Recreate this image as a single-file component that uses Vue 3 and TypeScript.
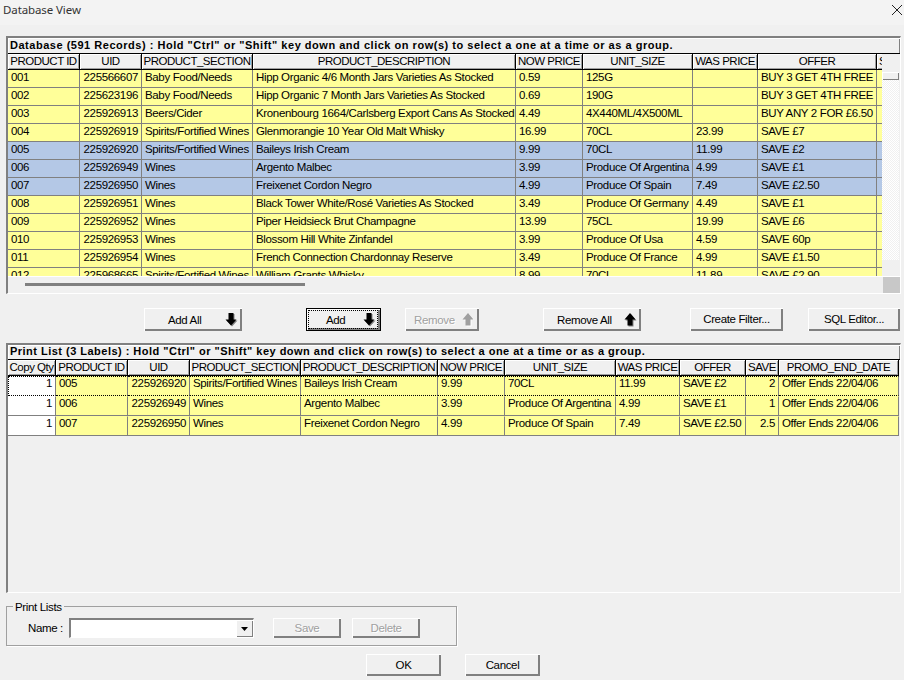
<script setup lang="ts">
interface Column {
  label: string;
  width: number;
  right?: boolean;
}

const dbColumns: Column[] = [
  { label: 'PRODUCT ID', width: 72 },
  { label: 'UID', width: 62, right: true },
  { label: 'PRODUCT_SECTION', width: 111 },
  { label: 'PRODUCT_DESCRIPTION', width: 263 },
  { label: 'NOW PRICE', width: 67 },
  { label: 'UNIT_SIZE', width: 110 },
  { label: 'WAS PRICE', width: 65 },
  { label: 'OFFER', width: 119 },
  { label: 'SAVE', width: 33 }
];

const dbRows: string[][] = [
  ['001', '225566607', 'Baby Food/Needs', 'Hipp Organic 4/6 Month Jars Varieties As Stocked', '0.59', '125G', '', 'BUY 3 GET 4TH FREE', ''],
  ['002', '225623196', 'Baby Food/Needs', 'Hipp Organic 7 Month Jars Varieties As Stocked', '0.69', '190G', '', 'BUY 3 GET 4TH FREE', ''],
  ['003', '225926913', 'Beers/Cider', 'Kronenbourg 1664/Carlsberg Export Cans As Stocked', '4.49', '4X440ML/4X500ML', '', 'BUY ANY 2 FOR £6.50', ''],
  ['004', '225926919', 'Spirits/Fortified Wines', 'Glenmorangie 10 Year Old Malt Whisky', '16.99', '70CL', '23.99', 'SAVE £7', ''],
  ['005', '225926920', 'Spirits/Fortified Wines', 'Baileys Irish Cream', '9.99', '70CL', '11.99', 'SAVE £2', ''],
  ['006', '225926949', 'Wines', 'Argento Malbec', '3.99', 'Produce Of Argentina', '4.99', 'SAVE £1', ''],
  ['007', '225926950', 'Wines', 'Freixenet Cordon Negro', '4.99', 'Produce Of Spain', '7.49', 'SAVE £2.50', ''],
  ['008', '225926951', 'Wines', 'Black Tower White/Rosé Varieties As Stocked', '3.49', 'Produce Of Germany', '4.49', 'SAVE £1', ''],
  ['009', '225926952', 'Wines', 'Piper Heidsieck Brut Champagne', '13.99', '75CL', '19.99', 'SAVE £6', ''],
  ['010', '225926953', 'Wines', 'Blossom Hill White Zinfandel', '3.99', 'Produce Of Usa', '4.59', 'SAVE 60p', ''],
  ['011', '225926954', 'Wines', 'French Connection Chardonnay Reserve', '3.49', 'Produce Of France', '4.99', 'SAVE £1.50', ''],
  ['012', '225968665', 'Spirits/Fortified Wines', 'William Grants Whisky', '8.99', '70CL', '11.89', 'SAVE £2.90', '']
];

const selectedIds = ['005', '006', '007'];

const printColumns: Column[] = [
  { label: 'Copy Qty', width: 48, right: true },
  { label: 'PRODUCT ID', width: 72 },
  { label: 'UID', width: 62, right: true },
  { label: 'PRODUCT_SECTION', width: 111 },
  { label: 'PRODUCT_DESCRIPTION', width: 137 },
  { label: 'NOW PRICE', width: 67 },
  { label: 'UNIT_SIZE', width: 111 },
  { label: 'WAS PRICE', width: 64 },
  { label: 'OFFER', width: 66 },
  { label: 'SAVE', width: 33, right: true },
  { label: 'PROMO_END_DATE', width: 120 }
];

const printRows: string[][] = [
  ['1', '005', '225926920', 'Spirits/Fortified Wines', 'Baileys Irish Cream', '9.99', '70CL', '11.99', 'SAVE £2', '2', 'Offer Ends 22/04/06'],
  ['1', '006', '225926949', 'Wines', 'Argento Malbec', '3.99', 'Produce Of Argentina', '4.99', 'SAVE £1', '1', 'Offer Ends 22/04/06'],
  ['1', '007', '225926950', 'Wines', 'Freixenet Cordon Negro', '4.99', 'Produce Of Spain', '7.49', 'SAVE £2.50', '2.5', 'Offer Ends 22/04/06']
];

const tableWidth = (cols: Column[]) => cols.reduce((sum, c) => sum + c.width, 0);
</script>

<template>
  <div class="dialog">
    <div class="titlebar">
      <span class="title">Database View</span>
      <svg class="close" width="12" height="12" viewBox="0 0 12 12">
        <path d="M1 1L11 11M11 1L1 11" stroke="#222" stroke-width="1" fill="none" />
      </svg>
    </div>

    <section class="panel db-panel">
      <div class="caption">Database (591 Records) : Hold "Ctrl" or "Shift" key down and click on row(s) to select a one at a time or as a group.</div>
      <div class="db-body">
        <div class="viewport">
          <table :style="{ width: tableWidth(dbColumns) + 'px' }">
            <colgroup>
              <col v-for="c in dbColumns" :key="c.label" :style="{ width: c.width + 'px' }" />
            </colgroup>
            <thead>
              <tr>
                <th v-for="c in dbColumns" :key="c.label">{{ c.label }}</th>
              </tr>
            </thead>
            <tbody>
              <tr v-for="row in dbRows" :key="row[0]" class="db-row" :class="{ selected: selectedIds.includes(row[0]) }">
                <td v-for="(cell, i) in row" :key="i" :class="{ right: dbColumns[i].right }">{{ cell }}</td>
              </tr>
            </tbody>
          </table>
        </div>
        <div class="vscroll">
          <div class="vtrack">
            <div class="vthumb"></div>
          </div>
        </div>
      </div>
      <div class="hscroll">
        <div class="htrack"><div class="hthumb"></div></div>
        <div class="corner"></div>
      </div>
    </section>

    <div class="actions">
      <button class="btn add-all">
        <span>Add All</span>
        <svg class="arrow" width="13" height="14" viewBox="0 0 13 14">
          <path d="M4.500 1h5v6.500h3L7 13.500 1.500 7.500h3z" fill="#808080" />
          <path d="M3.500 0h5v6.500h3L6 12.500 .5 6.500h3z" fill="#000" />
        </svg>
      </button>
      <button class="btn add focused">
        <span class="focus-ring">
          <span>Add</span>
          <svg class="arrow" width="13" height="14" viewBox="0 0 13 14">
            <path d="M4.500 1h5v6.500h3L7 13.500 1.500 7.500h3z" fill="#808080" />
            <path d="M3.500 0h5v6.500h3L6 12.500 .5 6.500h3z" fill="#000" />
          </svg>
        </span>
      </button>
      <button class="btn remove disabled">
        <span>Remove</span>
        <svg class="arrow" width="13" height="14" viewBox="0 0 13 14">
          <path d="M7 1l5.500 6h-3v6.500h-5V7.500h-3z" fill="#fff" />
          <path d="M6 0l5.500 6.500h-3v6h-5v-6h-3z" fill="#a0a0a0" />
        </svg>
      </button>
      <button class="btn remove-all">
        <span>Remove All</span>
        <svg class="arrow" width="13" height="14" viewBox="0 0 13 14">
          <path d="M7 1l5.500 6.500h-3v6h-5v-6h-3z" fill="#808080" />
          <path d="M6 0l5.500 6.500h-3v6h-5v-6h-3z" fill="#000" />
        </svg>
      </button>
      <button class="btn create-filter">Create Filter...</button>
      <button class="btn sql-editor">SQL Editor...</button>
    </div>

    <section class="panel print-panel">
      <div class="caption print-caption">Print List (3 Labels) : Hold "Ctrl" or "Shift" key down and click on row(s) to select a one at a time or as a group.</div>
      <table :style="{ width: tableWidth(printColumns) + 'px' }">
        <colgroup>
          <col v-for="c in printColumns" :key="c.label" :style="{ width: c.width + 'px' }" />
        </colgroup>
        <thead>
          <tr>
            <th v-for="c in printColumns" :key="c.label">{{ c.label }}</th>
          </tr>
        </thead>
        <tbody>
          <tr v-for="(row, r) in printRows" :key="row[1]" class="print-row" :class="{ current: r === 0 }">
            <td v-for="(cell, i) in row" :key="i" :class="{ right: printColumns[i].right, qty: i === 0 }">{{ cell }}</td>
          </tr>
        </tbody>
      </table>
    </section>

    <div class="group">
      <span class="legend">Print Lists</span>
      <span class="name-label">Name :</span>
      <div class="combo">
        <div class="combo-btn">
          <svg width="7" height="4" viewBox="0 0 7 4"><path d="M0 0h7L3.500 4z" fill="#000" /></svg>
        </div>
      </div>
      <button class="btn small disabled save">Save</button>
      <button class="btn small disabled delete">Delete</button>
    </div>

    <div class="footer">
      <button class="btn ok">OK</button>
      <button class="btn cancel">Cancel</button>
    </div>
  </div>
</template>

<style scoped>
.dialog {
  width: 904px;
  height: 680px;
  overflow: hidden;
  background: #f0f0f0;
  display: flex;
  flex-direction: column;
  font-family: "Liberation Sans", Arial, sans-serif;
  font-size: 11.5px;
  letter-spacing: -0.35px;
  color: #000;
}

.titlebar {
  height: 25px;
  flex: none;
  background: #f3f3f3;
  display: flex;
  align-items: center;
  justify-content: space-between;
  padding: 0 1px 6px 3px;
  box-sizing: border-box;
}

.title {
  font-family: "Noto Sans", sans-serif;
  font-size: 11.5px;
  letter-spacing: -0.1px;
  color: #333;
}

.close {
  display: block;
}

.panel {
  flex: none;
  margin-left: 6px;
  width: 895px;
  box-sizing: border-box;
  border-top: 2px solid #808080;
  border-left: 2px solid #808080;
  border-right: 1px solid #fff;
  border-bottom: 1px solid #fff;
}

.db-panel {
  margin-top: 11px;
  height: 258px;
}

.print-panel {
  margin-top: 12px;
  height: 250px;
}

.caption {
  height: 16px;
  box-sizing: border-box;
  line-height: 14px;
  padding-left: 2px;
  font-weight: bold;
  font-size: 11px;
  letter-spacing: 0.52px;
  white-space: nowrap;
  overflow: hidden;
  background: #f0f0f0;
  border-bottom: 1px solid #000;
  box-shadow: inset 1px 1px 0 #fff, inset -1px 0 0 #808080;
}

.print-caption {
  height: 15px;
  line-height: 13px;
  letter-spacing: 0.48px;
}

.db-body {
  display: flex;
  height: 222px;
}

.viewport {
  width: 874px;
  overflow: hidden;
}

table {
  table-layout: fixed;
  border-collapse: separate;
  border-spacing: 0;
}

th {
  height: 16px;
  box-sizing: border-box;
  padding: 0;
  font-weight: normal;
  font-size: 11.5px;
  letter-spacing: -0.5px;
  line-height: 13px;
  text-align: center;
  white-space: nowrap;
  overflow: hidden;
  background: #f0f0f0;
  border-right: 1px solid #000;
  border-bottom: 1px solid #000;
  box-shadow: inset 1px 1px 0 #fff, inset -1px -1px 0 #a0a0a0;
}

td {
  box-sizing: border-box;
  padding: 0 2px 0 3px;
  line-height: 13px;
  white-space: nowrap;
  overflow: hidden;
  background: #ffff99;
  border-right: 1px solid #808080;
  border-bottom: 1px solid #808080;
}

td.right {
  text-align: right;
  padding: 0 3px 0 0;
}

.db-row td {
  height: 18px;
  padding-bottom: 2px;
}

.db-row.selected td {
  background: #b4c8e6;
}

.print-row td {
  height: 20px;
  border-top: 1px solid transparent;
  vertical-align: top;
  padding-top: 0;
}

.print-row td.qty {
  background: #fff;
}

.print-row.current td {
  border-top: 1px dotted #000;
  border-bottom: 1px dotted #000;
}

.print-row.current td.qty {
  border-left: 1px dotted #000;
}

.vscroll {
  width: 17px;
  background: #f0f0f0;
  padding-top: 18px;
  box-sizing: border-box;
}

.vtrack {
  height: 188px;
  background-color: #f0f0f0;
  background-image: conic-gradient(#fff 25%, transparent 0 50%, #fff 0 75%, transparent 0);
  background-size: 2px 2px;
}

.vthumb {
  height: 8px;
  background: #f0f0f0;
  box-shadow: inset 1px 1px 0 #fff, inset -1px -1px 0 #808080;
}

.hscroll {
  display: flex;
  height: 17px;
}

.htrack {
  flex: 1;
  border-top: 1px solid #fff;
  background: #f0f0f0;
  padding: 6px 0 0 17px;
  box-sizing: border-box;
}

.hthumb {
  width: 280px;
  height: 3px;
  background: #808080;
}

.corner {
  width: 17px;
  background: #c8c8c8;
  border-top: 1px solid #fff;
  box-sizing: border-box;
}

.actions {
  flex: none;
  display: flex;
  margin-top: 14px;
  height: 23px;
  padding-left: 144px;
}

.btn {
  box-sizing: border-box;
  display: flex;
  align-items: center;
  justify-content: center;
  height: 23px;
  padding: 0;
  margin: 0;
  border: none;
  background: #f0f0f0;
  font: inherit;
  letter-spacing: inherit;
  color: #000;
  box-shadow: inset 1px 1px 0 #fff, inset -2px -2px 0 #808080;
}

.btn.disabled {
  color: #a0a0a0;
  text-shadow: 1px 1px 0 #fff;
}

.arrow {
  flex: none;
  margin-left: auto;
}

.add-all {
  width: 98px;
  padding: 0 4px 0 24px;
}

.add {
  width: 75px;
  margin-left: 64px;
  border: 1px solid #000;
  padding: 1px 2px 1px 1px;
}

.focus-ring {
  flex: 1;
  height: 100%;
  display: flex;
  align-items: center;
  box-sizing: border-box;
  padding: 0 1px 0 17px;
  border: 1px dotted #000;
}

.remove {
  width: 74px;
  margin-left: 24px;
  padding: 0 4px 0 9px;
}

.remove-all {
  width: 98px;
  margin-left: 64px;
  padding: 0 4px 0 14px;
}

.create-filter {
  width: 93px;
  margin-left: 49px;
  padding-bottom: 2px;
}

.sql-editor {
  width: 92px;
  margin-left: 25px;
  padding-bottom: 2px;
}

.group {
  flex: none;
  position: relative;
  box-sizing: border-box;
  margin: 13px 0 0 6px;
  width: 451px;
  height: 40px;
  border: 1px solid #a0a0a0;
  box-shadow: 1px 1px 0 #fff;
  display: flex;
  align-items: flex-start;
  padding-top: 11px;
}

.legend {
  position: absolute;
  left: 6px;
  top: -7px;
  padding: 0 2px;
  background: #f0f0f0;
  line-height: 14px;
}

.name-label {
  margin-left: 21px;
  width: 41px;
  line-height: 20px;
  flex: none;
}

.combo {
  width: 185px;
  height: 20px;
  flex: none;
  box-sizing: border-box;
  background: #fff;
  border-top: 2px solid #808080;
  border-left: 2px solid #808080;
  border-right: 1px solid #fff;
  border-bottom: 1px solid #fff;
  display: flex;
  justify-content: flex-end;
}

.combo-btn {
  width: 17px;
  background: #f0f0f0;
  display: flex;
  align-items: center;
  justify-content: center;
  box-shadow: inset 1px 1px 0 #fff, inset -1px -1px 0 #808080;
}

.small {
  height: 20px;
  width: 68px;
}

.save {
  margin-left: 19px;
}

.delete {
  margin-left: 11px;
}

.footer {
  flex: none;
  display: flex;
  margin-top: 8px;
  padding-left: 366px;
}

.ok,
.cancel {
  width: 75px;
  height: 22px;
}

.cancel {
  margin-left: 24px;
}
</style>

<style>
html,
body {
  margin: 0;
  background: #f0f0f0;
}
</style>
